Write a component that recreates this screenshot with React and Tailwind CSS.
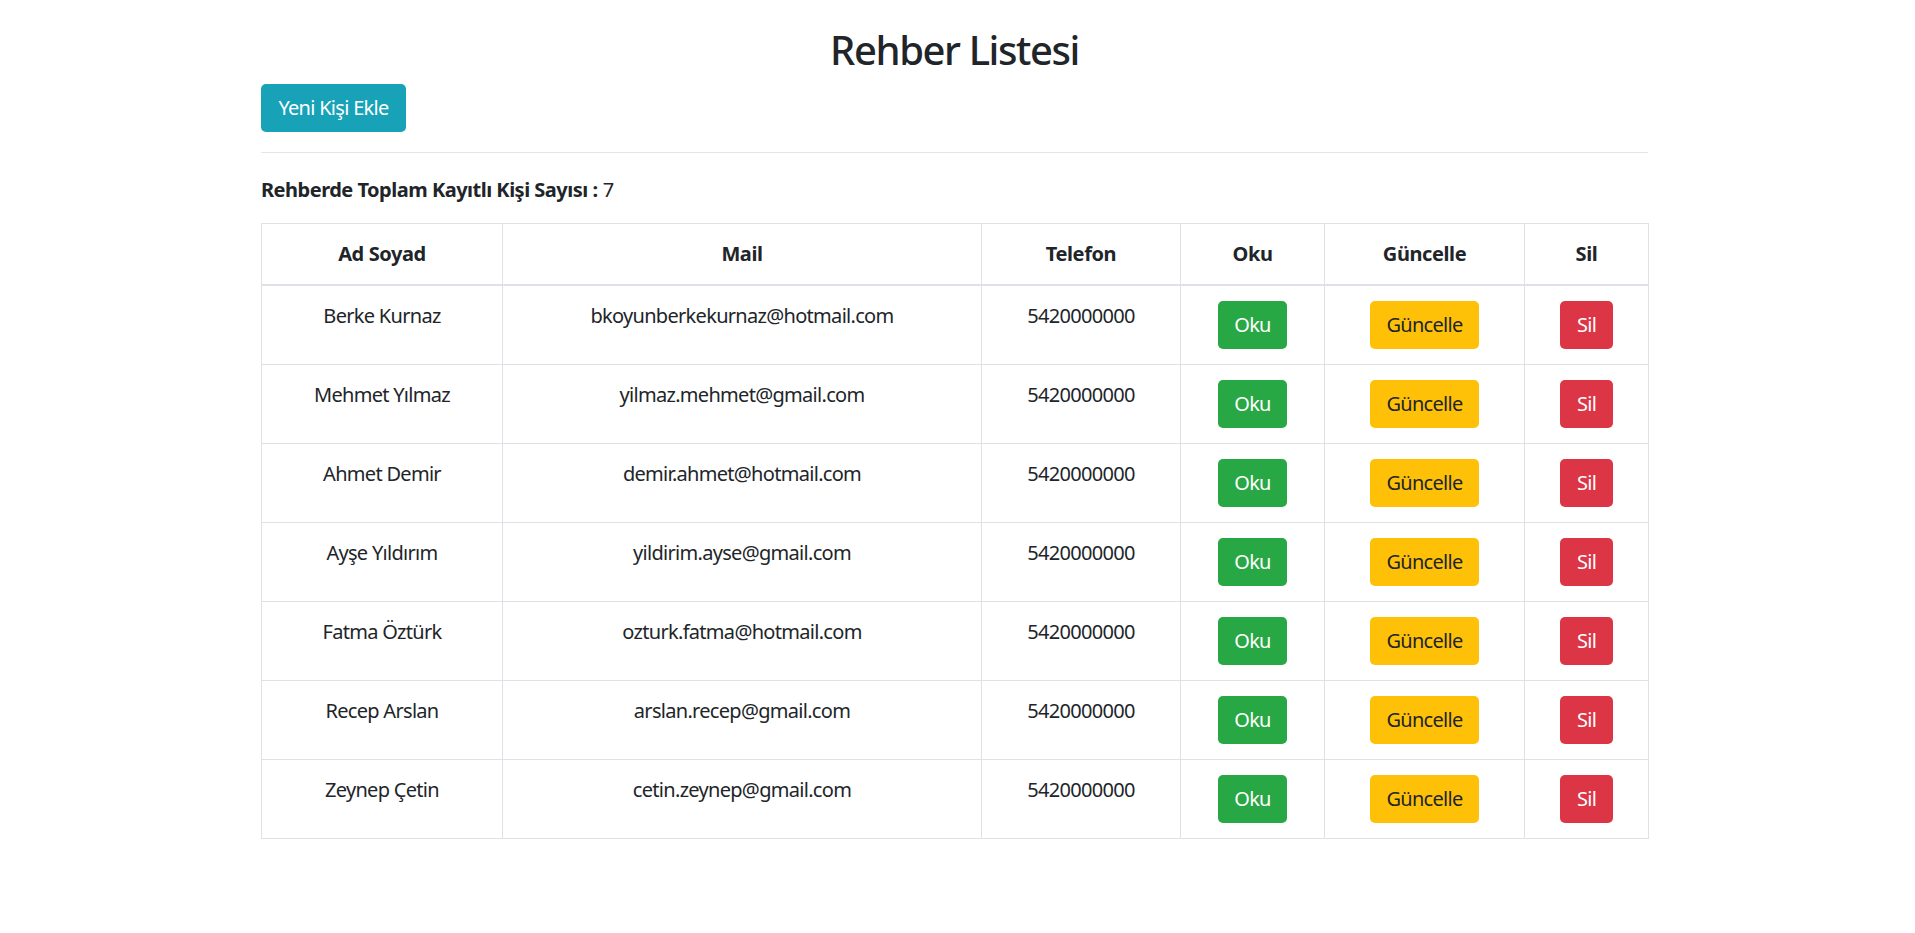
import React from "react";

const contacts = [
  { id: 1, name: "Berke Kurnaz", mail: "bkoyunberkekurnaz@hotmail.com", phone: "5420000000" },
  { id: 2, name: "Mehmet Yılmaz", mail: "yilmaz.mehmet@gmail.com", phone: "5420000000" },
  { id: 3, name: "Ahmet Demir", mail: "demir.ahmet@hotmail.com", phone: "5420000000" },
  { id: 4, name: "Ayşe Yıldırım", mail: "yildirim.ayse@gmail.com", phone: "5420000000" },
  { id: 5, name: "Fatma Öztürk", mail: "ozturk.fatma@hotmail.com", phone: "5420000000" },
  { id: 6, name: "Recep Arslan", mail: "arslan.recep@gmail.com", phone: "5420000000" },
  { id: 7, name: "Zeynep Çetin", mail: "cetin.zeynep@gmail.com", phone: "5420000000" },
];

const font = { fontFamily: '"Noto Sans", "Open Sans", sans-serif' };

const th = "border border-[#dee2e6] border-b-2 px-[15px] py-[15px] text-[20px] leading-[30px] font-bold tracking-[-0.02em] align-bottom";
const td = "border border-[#dee2e6] px-[15px] py-[15px] text-[20px] leading-[30px] tracking-[-0.035em] align-top";
const btn = "inline-flex items-center justify-center h-[48px] rounded-[5px] text-[20px] leading-[30px] tracking-[-0.035em]";

export default function App() {
  return (
    <div className="min-h-screen bg-white text-[#212529]" style={font}>
      <div className="pl-[261px] pr-[267px] pt-[26px]">
        <h2 className="text-center text-[40px] leading-[48px] font-medium tracking-[-0.035em] mb-[10px]">
          Rehber Listesi
        </h2>
        <button className={`${btn} w-[145px] bg-[#17a2b8] text-white`}>Yeni Kişi Ekle</button>
        <hr className="my-[20px] border-t border-[#e6e6e6]" />
        <p className="text-[20px] leading-[30px] pt-[2px] mb-[18px]">
          <span className="font-bold tracking-[-0.025em]">Rehberde Toplam Kayıtlı Kişi Sayısı :</span>{" "}
          {contacts.length}
        </p>

        <table className="w-full table-fixed border-collapse text-center">
          <colgroup>
            <col className="w-[241px]" />
            <col className="w-[479px]" />
            <col className="w-[199px]" />
            <col className="w-[144px]" />
            <col className="w-[200px]" />
            <col className="w-[124px]" />
          </colgroup>
          <thead>
            <tr>
              <th className={th}>Ad Soyad</th>
              <th className={th}>Mail</th>
              <th className={th}>Telefon</th>
              <th className={th}>Oku</th>
              <th className={th}>Güncelle</th>
              <th className={th}>Sil</th>
            </tr>
          </thead>
          <tbody>
            {contacts.map((c) => (
              <tr key={c.id}>
                <td className={td}>{c.name}</td>
                <td className={td}>{c.mail}</td>
                <td className={td}>{c.phone}</td>
                <td className={td}>
                  <button className={`${btn} w-[69px] bg-[#28a745] text-white`}>Oku</button>
                </td>
                <td className={td}>
                  <button className={`${btn} w-[109px] bg-[#ffc107] text-[#212529]`}>Güncelle</button>
                </td>
                <td className={td}>
                  <button className={`${btn} w-[53px] bg-[#dc3545] text-white`}>Sil</button>
                </td>
              </tr>
            ))}
          </tbody>
        </table>
      </div>
    </div>
  );
}
